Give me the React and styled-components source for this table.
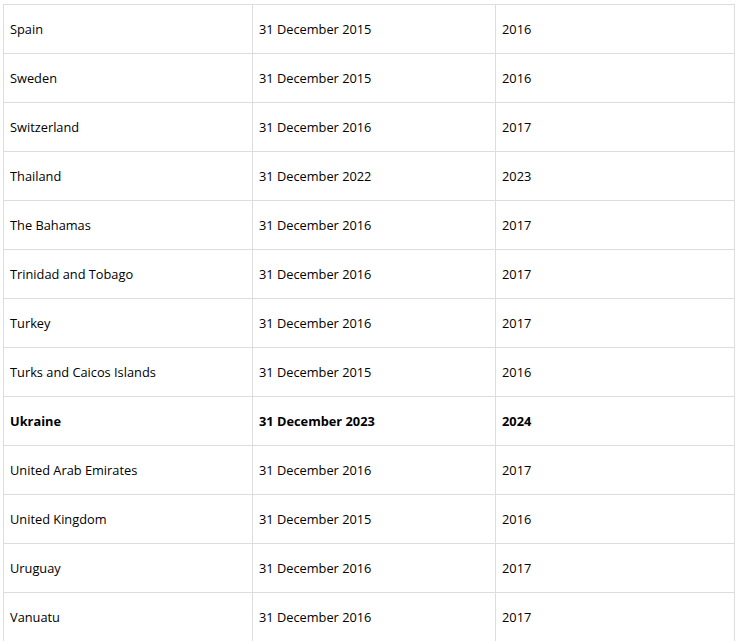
import React from 'react'
import styled, { createGlobalStyle } from 'styled-components'

const GlobalStyle = createGlobalStyle`
  html, body {
    margin: 0;
    padding: 0;
    background: #ffffff;
  }
`

const rows = [
  ['Spain', '31 December 2015', '2016'],
  ['Sweden', '31 December 2015', '2016'],
  ['Switzerland', '31 December 2016', '2017'],
  ['Thailand', '31 December 2022', '2023'],
  ['The Bahamas', '31 December 2016', '2017'],
  ['Trinidad and Tobago', '31 December 2016', '2017'],
  ['Turkey', '31 December 2016', '2017'],
  ['Turks and Caicos Islands', '31 December 2015', '2016'],
  ['Ukraine', '31 December 2023', '2024', true],
  ['United Arab Emirates', '31 December 2016', '2017'],
  ['United Kingdom', '31 December 2015', '2016'],
  ['Uruguay', '31 December 2016', '2017'],
  ['Vanuatu', '31 December 2016', '2017'],
]

const Page = styled.div`
  padding: 4px 0 0 3px;
`

const Table = styled.div`
  width: 732px;
  border-top: 1px solid #dddddd;
  border-left: 1px solid #dddddd;
  box-sizing: border-box;
  font-family: "Open Sans", "Liberation Sans", sans-serif;
  font-size: 12.8px;
  color: #000;
`

const Row = styled.div`
  display: grid;
  grid-template-columns: 249px 243px 239px;
  height: 49px;
  font-weight: ${p => (p.$bold ? 700 : 400)};
`

const Cell = styled.div`
  display: flex;
  align-items: center;
  padding-left: 6px;
  padding-bottom: 1px;
  border-right: 1px solid #dddddd;
  border-bottom: 1px solid #dddddd;
  box-sizing: border-box;
  white-space: nowrap;
`

export default function App() {
  return (
    <Page>
      <GlobalStyle />
      <Table>
        {rows.map(([country, date, year, bold]) => (
          <Row key={country} $bold={bold}>
            <Cell>{country}</Cell>
            <Cell>{date}</Cell>
            <Cell>{year}</Cell>
          </Row>
        ))}
      </Table>
    </Page>
  )
}
